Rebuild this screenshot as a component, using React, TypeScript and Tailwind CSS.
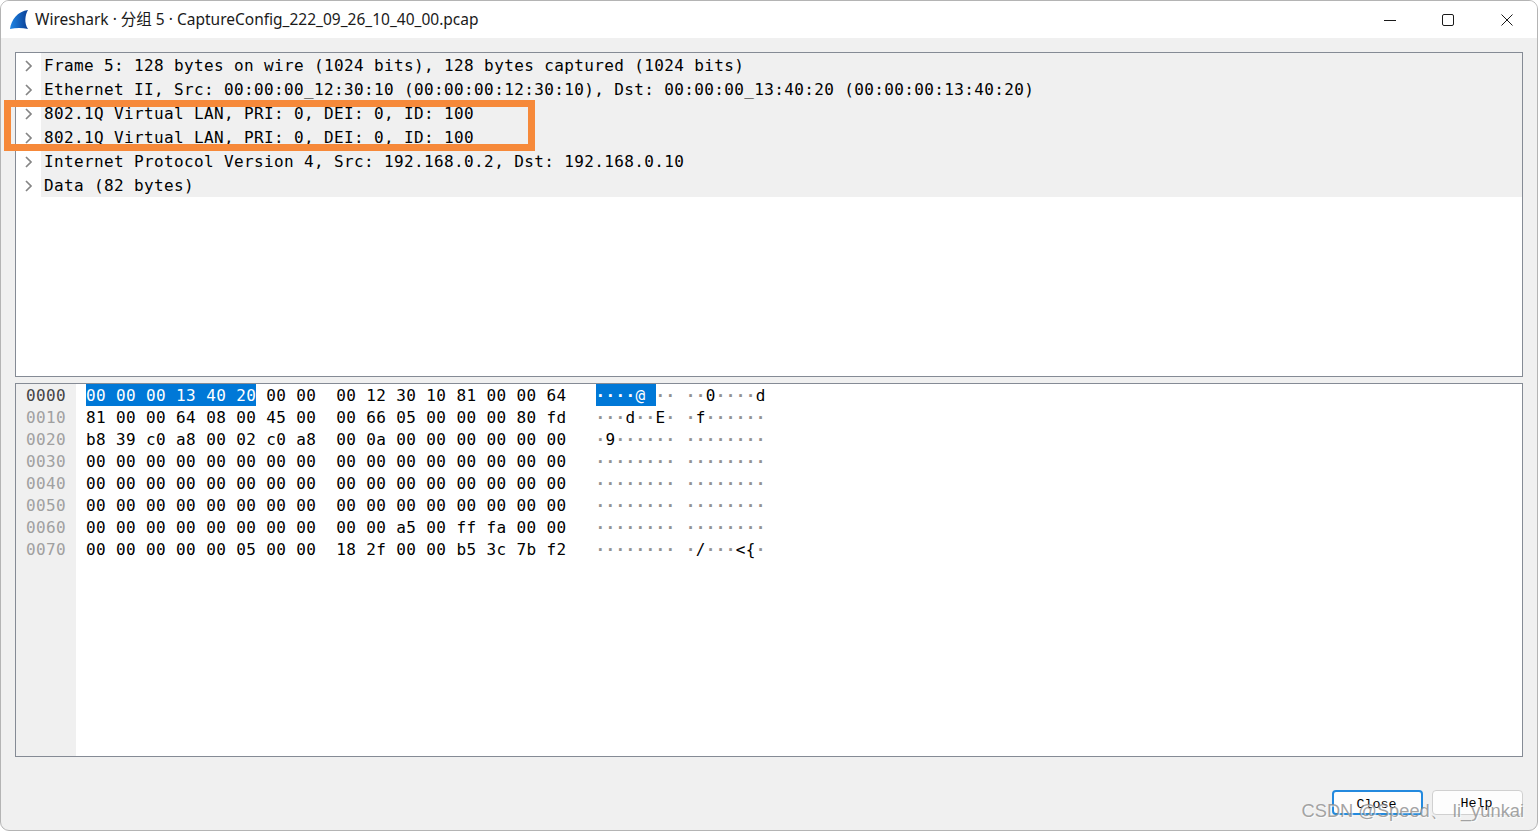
const treeRows = [
  "Frame 5: 128 bytes on wire (1024 bits), 128 bytes captured (1024 bits)",
  "Ethernet II, Src: 00:00:00_12:30:10 (00:00:00:12:30:10), Dst: 00:00:00_13:40:20 (00:00:00:13:40:20)",
  "802.1Q Virtual LAN, PRI: 0, DEI: 0, ID: 100",
  "802.1Q Virtual LAN, PRI: 0, DEI: 0, ID: 100",
  "Internet Protocol Version 4, Src: 192.168.0.2, Dst: 192.168.0.10",
  "Data (82 bytes)",
]

const hexRows = [
  "00 00 00 13 40 20 00 00 00 12 30 10 81 00 00 64",
  "81 00 00 64 08 00 45 00 00 66 05 00 00 00 80 fd",
  "b8 39 c0 a8 00 02 c0 a8 00 0a 00 00 00 00 00 00",
  "00 00 00 00 00 00 00 00 00 00 00 00 00 00 00 00",
  "00 00 00 00 00 00 00 00 00 00 00 00 00 00 00 00",
  "00 00 00 00 00 00 00 00 00 00 00 00 00 00 00 00",
  "00 00 00 00 00 00 00 00 00 00 a5 00 ff fa 00 00",
  "00 00 00 00 00 05 00 00 18 2f 00 00 b5 3c 7b f2",
]

function Ascii({ b, selected }: { b: string; selected: boolean }) {
  const code = parseInt(b, 16)
  const printable = code >= 0x20 && code < 0x7f
  const ch = printable ? String.fromCharCode(code) : "·"
  if (selected) {
    return <span className={`inline-block h-[22px] bg-[#0078d7] text-white ${printable ? "" : "font-bold"}`}>{ch}</span>
  }
  return <span className={printable ? "text-black" : "font-bold text-[#929292]"}>{ch}</span>
}

function HexRow({ hex, index }: { hex: string; index: number }) {
  const bytes = hex.split(" ")
  const isSel = (i: number) => index === 0 && i < 6
  return (
    <div className="flex h-[22px] items-start leading-[24px]">
      <div className={`w-[60px] pl-[10px] ${index === 0 ? "text-[#444444]" : "text-[#a0a0a0]"}`}>
        {(index * 16).toString(16).padStart(4, "0")}
      </div>
      <div className="pl-[10px] whitespace-pre">
        {bytes.map((b, i) => (
          <span key={i}>
            <span className={isSel(i) ? "inline-block h-[22px] bg-[#0078d7] text-white" : ""}>{b}</span>
            <span className={isSel(i) && i < 5 ? "inline-block h-[22px] bg-[#0078d7]" : ""}>{i === 7 ? "  " : i === 15 ? "" : " "}</span>
          </span>
        ))}
        <span className="-ml-px">{"   "}</span>
        {bytes.map((b, i) => (
          <span key={i}>
            <Ascii b={b} selected={isSel(i)} />
            {i === 7 ? " " : ""}
          </span>
        ))}
      </div>
    </div>
  )
}

export default function App() {
  return (
    <div className="w-[1538px] h-[831px] overflow-hidden bg-white">
      <div className="relative flex flex-col h-full rounded-[9px] overflow-hidden border border-[#b4b4b4] bg-[#f0f0f0]">
        {/* Title bar */}
        <div className="flex h-[37px] shrink-0 items-center bg-white pl-[9px] font-['Noto_Sans','Noto_Sans_CJK_SC',sans-serif] text-[15.5px] text-[#1a1a1a]">
          <svg width="19" height="20" viewBox="0 0 19 20" className="mr-[6px]">
            <defs>
              <linearGradient id="fin" x1="0" y1="0" x2="1" y2="0">
                <stop offset="0" stopColor="#1f86e6" />
                <stop offset="1" stopColor="#0b3f94" />
              </linearGradient>
            </defs>
            <path d="M0 19C1 10 8 1 18 0C15 5 14 13 18 19C12 17.5 6 17.5 0 19Z" fill="url(#fin)" />
          </svg>
          <span>Wireshark · 分组 5 · CaptureConfig_222_09_26_10_40_00.pcap</span>
          <div className="ml-auto flex items-center text-[#1a1a1a]">
            <svg width="12" height="12" viewBox="0 0 12 12" className="mr-[46px]"><path d="M0 6.5h12" stroke="currentColor" /></svg>
            <svg width="12" height="12" viewBox="0 0 12 12" className="mr-[47px]"><rect x=".5" y=".5" width="11" height="11" rx="1.5" fill="none" stroke="currentColor" /></svg>
            <svg width="12" height="12" viewBox="0 0 12 12" className="mr-[24px]"><path d="M.5.5l11 11M11.5.5l-11 11" stroke="currentColor" /></svg>
          </div>
        </div>

        <div className="flex flex-1 flex-col px-[14px] pt-[14px] font-['DejaVu_Sans_Mono',monospace] text-[16px] tracking-[0.37px] text-black">
          {/* Packet tree */}
          <div className="h-[325px] shrink-0 border border-[#858b95] bg-white">
            {treeRows.map((row, i) => (
              <div key={i} className="flex h-6 items-center">
                <div className="flex w-[25px] shrink-0 justify-center bg-white pt-px text-[#858585]">
                  <svg width="8" height="12" viewBox="0 0 8 12"><path d="M1 1l5 5-5 5" fill="none" stroke="currentColor" strokeWidth="1.7" /></svg>
                </div>
                <div className="flex-1 h-full bg-[#f0f0f0] pl-[3px] leading-[26px] whitespace-pre">{row}</div>
              </div>
            ))}
          </div>

          {/* Packet bytes */}
          <div className="mt-[6px] relative h-[374px] shrink-0 border border-[#858b95] bg-white">
            <div className="absolute inset-y-0 left-0 w-[60px] bg-[#f0f0f0]" />
            <div className="relative">
              {hexRows.map((hex, i) => (
                <HexRow key={i} hex={hex} index={i} />
              ))}
            </div>
          </div>

          {/* Buttons */}
          <div className="flex justify-end gap-[9px] mt-[33px] font-['Liberation_Mono',monospace] text-[13.33px] tracking-normal text-black">
            <button className="h-[25px] w-[91px] rounded-[4px] border-2 border-[#2389de] bg-[#fdfdfd] pt-[3px] pr-[2px]">Close</button>
            <button className="h-[25px] w-[91px] rounded-[4px] border border-[#d0d0d0] bg-[#fdfdfd] pt-[3px] pr-[2px]">Help</button>
          </div>
        </div>

        {/* Annotation drawn over the capture */}
        <div className="absolute left-[3px] top-[99px] h-[51px] w-[531px] border-[7px] border-[#f6893a]" />

        {/* CSDN watermark */}
        <div className="absolute right-[13px] bottom-[6px] font-['Liberation_Sans',sans-serif] text-[18.3px] text-[#8c8c8c]/80 [text-shadow:1px_1px_1px_rgba(255,255,255,0.8)]">
          CSDN @Speed、 li_yunkai
        </div>
      </div>
    </div>
  )
}
